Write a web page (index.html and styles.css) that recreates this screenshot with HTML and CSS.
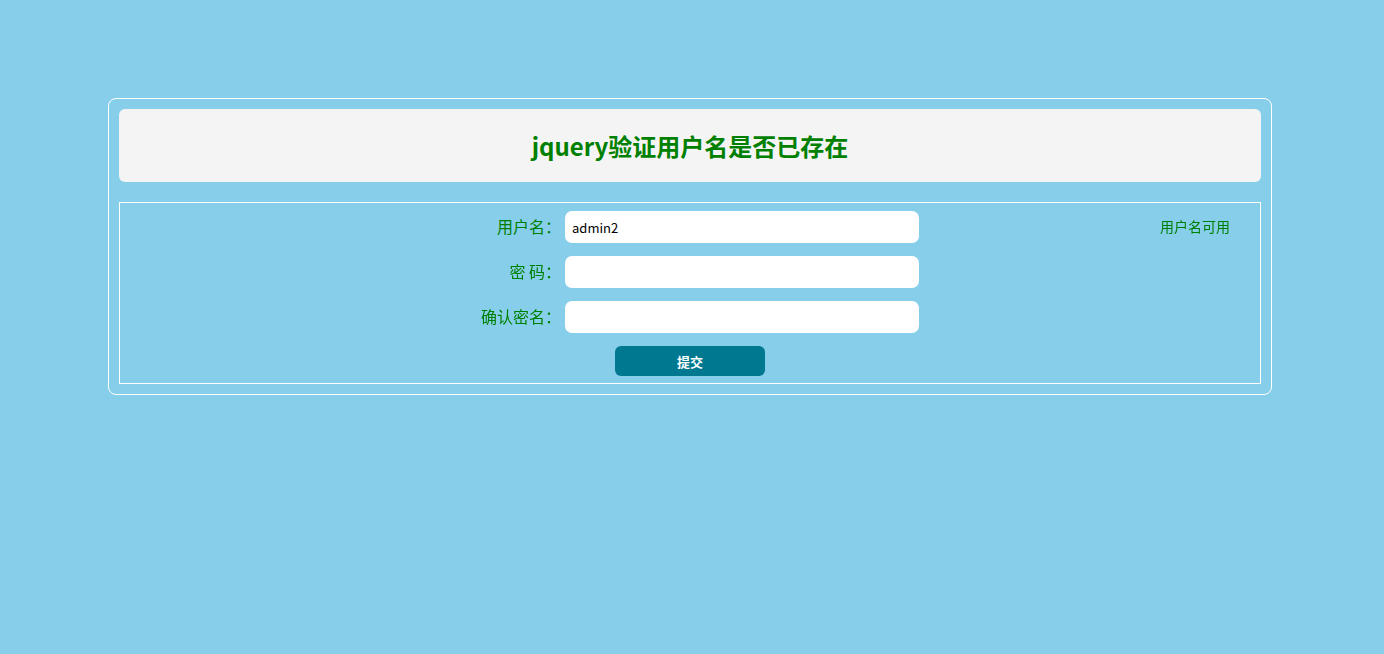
FILE: index.html
```html
<!DOCTYPE html>
<html lang="zh-CN">
<head>
  <meta charset="UTF-8">
  <title>jquery验证用户名是否已存在</title>
  <link rel="stylesheet" href="styles.css">
</head>
<body>

  <div class="wrap">
    <!-- 标题 -->
    <div class="title-bar">
      <h1>jquery验证用户名是否已存在</h1>
    </div>

    <!-- 注册表单 -->
    <form class="reg-form" onsubmit="return false;">
      <div class="row">
        <label for="username">用户名：</label>
        <input type="text" id="username" class="field" value="admin2" autofocus>
        <span class="tip">用户名可用</span>
      </div>
      <div class="row">
        <label for="password">密 码：</label>
        <input type="password" id="password" class="field">
        <span class="tip"></span>
      </div>
      <div class="row">
        <label for="repassword">确认密名：</label>
        <input type="password" id="repassword" class="field">
        <span class="tip"></span>
      </div>
      <div class="btn-row">
        <button type="submit" class="btn-submit">提交</button>
      </div>
    </form>
  </div>

</body>
</html>
```

FILE: styles.css
```css
/* 基础样式 */
* {
  box-sizing: border-box;
  margin: 0;
  padding: 0;
}

body {
  background-color: #87ceeb;
  font-family: "Noto Sans CJK SC", "Open Sans", sans-serif;
  padding-top: 98px;
}

/* 外框 */
.wrap {
  width: 1164px;
  margin-left: 108px;
  padding: 10px;
  border: 1px solid #fff;
  border-radius: 8px;
}

.title-bar {
  height: 73px;
  background-color: #f4f4f4;
  border-radius: 6px;
  display: flex;
  align-items: center;
  justify-content: center;
}

.title-bar h1 {
  color: #008000;
  font-size: 24px;
  font-weight: bold;
  line-height: 1;
}

/* 表单 */
.reg-form {
  margin-top: 20px;
  border: 1px solid #fff;
  padding: 8px 0 7px;
  display: flex;
  flex-direction: column;
  gap: 13px;
}

.row {
  display: grid;
  grid-template-columns: 432px 354px 1fr;
  column-gap: 13px;
  align-items: center;
}

.row label {
  text-align: right;
  color: #008000;
  font-size: 16px;
  line-height: 1;
  margin-right: -9px;
  padding-bottom: 3px;
}

.field {
  height: 32px;
  border: none;
  border-radius: 7px;
  background: #fff;
  padding: 0 7px;
  font-family: "Noto Sans CJK SC", "Open Sans", sans-serif;
  font-size: 13px;
  color: #000;
  outline: none;
}

.tip {
  padding-left: 228px;
  padding-bottom: 3px;
  color: #008000;
  font-size: 14px;
  line-height: 1;
}

.btn-row {
  display: flex;
  justify-content: center;
}

.btn-submit {
  width: 150px;
  height: 30px;
  border: none;
  border-radius: 6px;
  background-color: #00788f;
  color: #fff;
  font-family: "Noto Sans CJK SC", sans-serif;
  font-size: 13px;
  font-weight: bold;
  cursor: pointer;
}
```
